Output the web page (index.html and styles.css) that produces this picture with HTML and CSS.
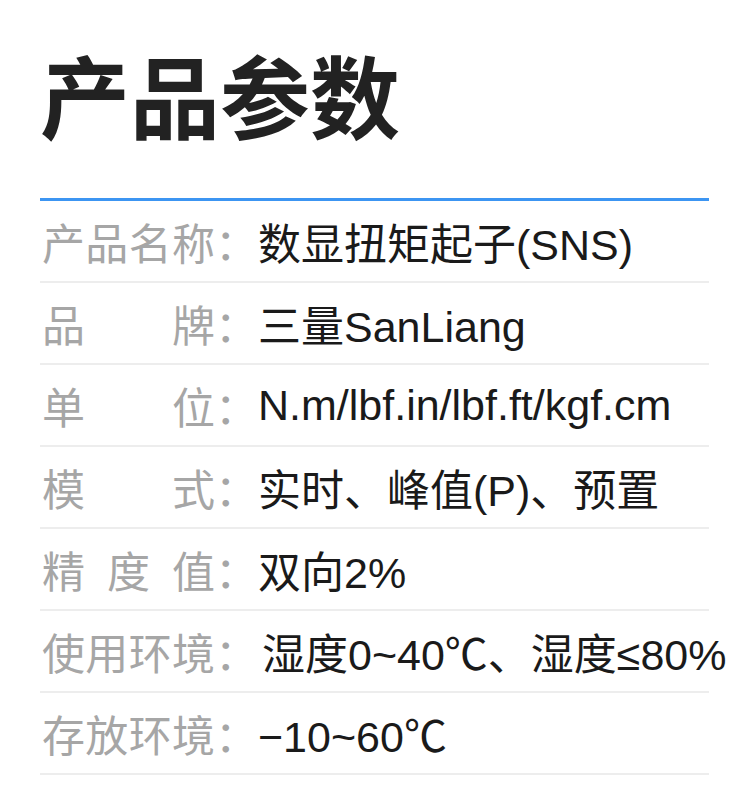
FILE: index.html
```html
<!DOCTYPE html>
<html lang="zh-CN">
<head>
    <meta charset="UTF-8">
    <meta name="viewport" content="width=device-width, initial-scale=1.0">
    <title>产品参数</title>
    <link rel="stylesheet" href="styles.css">
</head>
<body>

<div class="params">
    <h1>产品参数</h1>

    <div class="table">
        <div class="row">
            <span class="label">产品名称</span><span class="colon">：</span>
            <span class="value">数显扭矩起子(SNS)</span>
        </div>
        <div class="row">
            <span class="label">品牌</span><span class="colon">：</span>
            <span class="value">三量SanLiang</span>
        </div>
        <div class="row">
            <span class="label">单位</span><span class="colon">：</span>
            <span class="value">N.m/lbf.in/lbf.ft/kgf.cm</span>
        </div>
        <div class="row">
            <span class="label">模式</span><span class="colon">：</span>
            <span class="value">实时、峰值(P)、预置</span>
        </div>
        <div class="row">
            <span class="label">精度值</span><span class="colon">：</span>
            <span class="value">双向2%</span>
        </div>
        <div class="row">
            <span class="label">使用环境</span><span class="colon">：</span>
            <span class="value wide">湿度0~40℃、湿度≤80%</span>
        </div>
        <div class="row">
            <span class="label">存放环境</span><span class="colon">：</span>
            <span class="value">−10~60℃</span>
        </div>
    </div>
</div>

</body>
</html>
```

FILE: styles.css
```css
body {
    margin: 0;
    background-color: white;
    font-family: "Liberation Sans", "Noto Sans CJK SC", sans-serif;
}

.params {
    width: 669px;
    padding: 48px 0 0 40px;
}

h1 {
    margin: 0;
    font-family: "Noto Sans CJK SC", sans-serif;
    font-size: 90px;
    line-height: 90px;
    font-weight: bold;
    color: #222;
}

.table {
    margin-top: 60px;
    border-top: 3px solid #3c95f2;
}

.row {
    display: flex;
    align-items: center;
    height: 80px;
    border-bottom: 2px solid #ededed;
    font-size: 43px;
    white-space: nowrap;
}

.label {
    flex-shrink: 0;
    width: 173px;
    margin-left: 2px;
    color: #a6a6a6;
    font-family: "Noto Sans CJK SC", sans-serif;
    text-align: justify;
    text-align-last: justify;
}

.colon {
    flex-shrink: 0;
    width: 43px;
    color: #a6a6a6;
    font-family: "Noto Sans CJK SC", sans-serif;
}

.value {
    color: #1a1a1a;
}

.wide {
    margin-left: 4px;
}
```
